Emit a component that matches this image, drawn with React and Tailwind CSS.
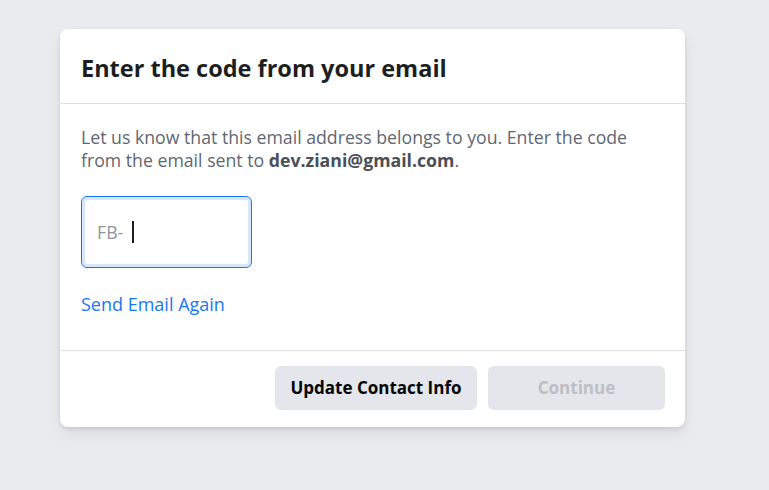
import React from 'react';

const App = () => {
  return (
    <div className="min-h-[490px] w-full bg-[#e9ebee] pt-[29px] pl-[60px]" style={{ fontFamily: '"Open Sans", "Liberation Sans", sans-serif' }}>
      <div className="w-[625px] rounded-lg bg-white shadow-[0_2px_4px_rgba(0,0,0,0.1),0_8px_16px_rgba(0,0,0,0.06)]">
        <div className="h-[75px] border-b border-[#dddfe2] px-[21px] pt-[3px] flex items-center">
          <h2 className="text-[23.5px] font-bold text-[#1c1e21] leading-7">Enter the code from your email</h2>
        </div>

        <div className="px-[21px] pt-[22px] pb-[35px]">
          <p className="text-[17.7px] leading-[23px] text-[#606770]">
            Let us know that this email address belongs to you. Enter the code from the email sent to{' '}
            <span className="font-bold text-[#4b4f56]">dev.ziani@gmail.com</span>.
          </p>

          <div className="mt-[24px] w-[171px] h-[72px] rounded-md border border-[#1877f2] shadow-[inset_0_0_0_3px_#d8e6fb] flex items-center px-[15px]">
            <span className="text-[17.7px] text-[#90949c]">FB-</span>
            <span className="ml-[9px] h-[22px] w-[2px] bg-[#1c1e21]" />
          </div>

          <a href="#" className="mt-[25px] block text-[18px] leading-[22px] text-[#1877f2]">Send Email Again</a>
        </div>

        <div className="border-t border-[#dddfe2] px-[20px] pt-[15px] pb-[17px] flex justify-end gap-[11px]">
          <button className="h-[44px] w-[202px] rounded-md bg-[#e4e6eb] text-[17px] font-bold text-[#050505]">Update Contact Info</button>
          <button className="h-[44px] w-[177px] rounded-md bg-[#e4e6eb] text-[17px] font-bold text-[#bcc0c4]">Continue</button>
        </div>
      </div>
    </div>
  );
};

export default App;
